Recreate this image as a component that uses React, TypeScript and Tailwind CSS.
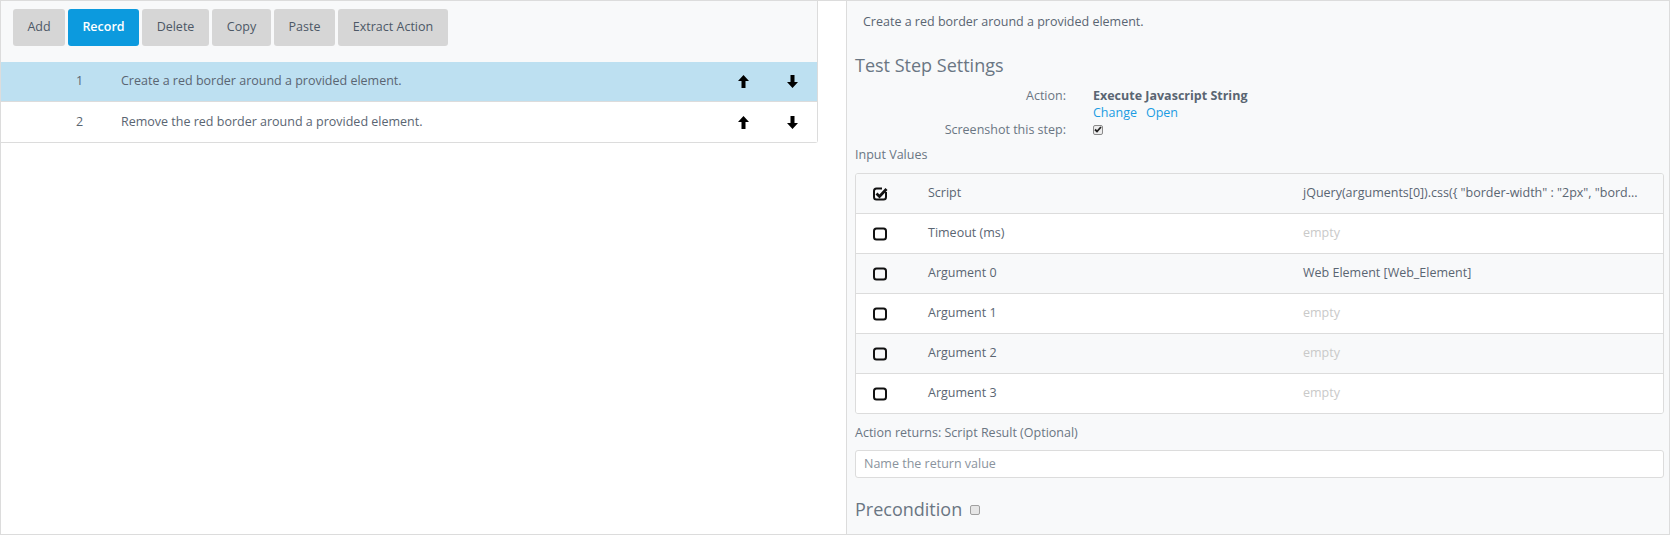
import React from "react";

const font = { fontFamily: '"Open Sans", "Liberation Sans", sans-serif' };

const ArrowUp = () => (
  <svg width="11" height="13" viewBox="0 0 11 13">
    <path d="M5.5 0 L11 6 L7.5 6 L7.5 13 L3.5 13 L3.5 6 L0 6 Z" fill="#000" />
  </svg>
);

const ArrowDown = () => (
  <svg width="11" height="13" viewBox="0 0 11 13">
    <path d="M5.5 13 L11 7 L7.5 7 L7.5 0 L3.5 0 L3.5 7 L0 7 Z" fill="#000" />
  </svg>
);

const BoxIcon = ({ checked }: { checked: boolean }) => (
  <svg width="15" height="14" viewBox="0 0 15 14">
    <rect x="1" y="1.5" width="12" height="11" rx="2.5" fill="none" stroke="#111" strokeWidth="2" />
    {checked && (
      <>
        <rect x="9" y="0" width="6" height="5" fill="#f8f9fa" />
        <path d="M3.5 6.5 L6.5 9.5 L13.5 2" fill="none" stroke="#111" strokeWidth="2.8" />
      </>
    )}
  </svg>
);

const buttons = [
  { label: "Add", w: "w-[52px]" },
  { label: "Record", w: "w-[71px]", primary: true },
  { label: "Delete", w: "w-[67px]" },
  { label: "Copy", w: "w-[59px]" },
  { label: "Paste", w: "w-[61px]" },
  { label: "Extract Action", w: "w-[110px]" },
];

const steps = [
  "Create a red border around a provided element.",
  "Remove the red border around a provided element.",
];

const inputs = [
  { name: "Script", value: 'jQuery(arguments[0]).css({ "border-width" : "2px", "bord...', checked: true },
  { name: "Timeout (ms)", value: "" },
  { name: "Argument 0", value: "Web Element [Web_Element]" },
  { name: "Argument 1", value: "" },
  { name: "Argument 2", value: "" },
  { name: "Argument 3", value: "" },
];

export default function App() {
  return (
    <div
      style={font}
      className="w-[1670px] h-[535px] flex border border-[#dcdcdc] bg-white text-[12.5px] text-[#5a6572] overflow-hidden"
    >
      {/* steps list */}
      <div className="w-[817px] shrink-0">
        <div className="border-r border-b border-[#dcdcdc] rounded-br-[3px]">
          <div className="h-[61px] bg-[#f8f9fa] flex gap-[3px] pl-[12px] pt-[8px]">
            {buttons.map((b) => (
              <div
                key={b.label}
                className={`${b.w} h-[37px] rounded-[3px] flex items-center justify-center ${
                  b.primary ? "bg-[#0c9ade] text-white font-semibold" : "bg-[#d6d6d6] text-[#4d5866]"
                }`}
              >
                {b.label}
              </div>
            ))}
          </div>
          {steps.map((s, i) => (
            <div
              key={s}
              className={`h-[40px] flex items-center ${
                i === steps.length - 1 ? "" : "border-b border-[#dcdcdc]"
              } ${i === 0 ? "bg-[#bde0f1]" : "bg-white"}`}
            >
              <div className="w-[120px] pl-[75px]">{i + 1}</div>
              <div className="flex-1">{s}</div>
              <div className="w-[50px] flex justify-center">
                <ArrowUp />
              </div>
              <div className="w-[49px] flex justify-center">
                <ArrowDown />
              </div>
            </div>
          ))}
        </div>
      </div>

      {/* settings panel */}
      <div className="ml-[28px] flex-1 border-l border-[#dcdcdc] bg-[#f8f9fa] pr-[5px]">
        <div className="h-[42px] flex items-center pl-[16px]">
          Create a red border around a provided element.
        </div>
        <div className="h-[44px] flex items-center pl-[8px] text-[18px] text-[#6a7683]">
          Test Step Settings
        </div>
        <div className="grid grid-cols-[219px_1fr] gap-x-[27px] leading-[17px]">
          <div className="text-right text-[#6a7683]">Action:</div>
          <div className="font-bold">Execute Javascript String</div>
          <div />
          <div className="flex gap-[9px] text-[#1b9ce2]">
            <span>Change</span>
            <span>Open</span>
          </div>
          <div className="text-right text-[#6a7683]">Screenshot this step:</div>
          <div className="flex items-center">
            <span className="w-[10px] h-[10px] rounded-[2px] border border-[#8a8a8a] bg-[#ececec] flex items-center justify-center">
              <svg width="8" height="7" viewBox="0 0 8 7">
                <path d="M1 3.5 L3 5.5 L7 1" fill="none" stroke="#222" strokeWidth="1.8" />
              </svg>
            </span>
          </div>
        </div>
        <div className="pl-[8px] pt-[8px] pb-[9px] leading-[18px] text-[#6a7683]">Input Values</div>

        <div className="ml-[8px] border border-[#dcdcdc] rounded-[3px] overflow-hidden">
          {inputs.map((r, i) => (
            <div
              key={r.name}
              className={`flex items-center ${
                i === inputs.length - 1 ? "h-[39px]" : "h-[40px] border-b border-[#dcdcdc]"
              } ${i % 2 === 0 ? "bg-[#f8f9fa]" : "bg-white"}`}
            >
              <div className="w-[72px] pl-[17px] flex items-center">
                <BoxIcon checked={!!r.checked} />
              </div>
              <div className="w-[375px]">{r.name}</div>
              <div className={r.value ? "" : "text-[#c9c9c9]"}>{r.value || "empty"}</div>
            </div>
          ))}
        </div>

        <div className="pl-[8px] mt-[10px] leading-[18px] text-[#6a7683]">
          Action returns: Script Result (Optional)
        </div>
        <div className="ml-[8px] mt-[8px] h-[28px] border border-[#dcdcdc] rounded-[3px] bg-white flex items-center pl-[8px] text-[#8a939d]">
          Name the return value
        </div>
        <div className="pl-[8px] mt-[17px] flex items-center gap-[8px] text-[18px] leading-[28px] text-[#6a7683]">
          <span>Precondition</span>
          <span className="w-[10px] h-[10px] rounded-[2px] border border-[#a0a0a0] bg-[#e6e6e6] mt-[2px]" />
        </div>
      </div>
    </div>
  );
}
